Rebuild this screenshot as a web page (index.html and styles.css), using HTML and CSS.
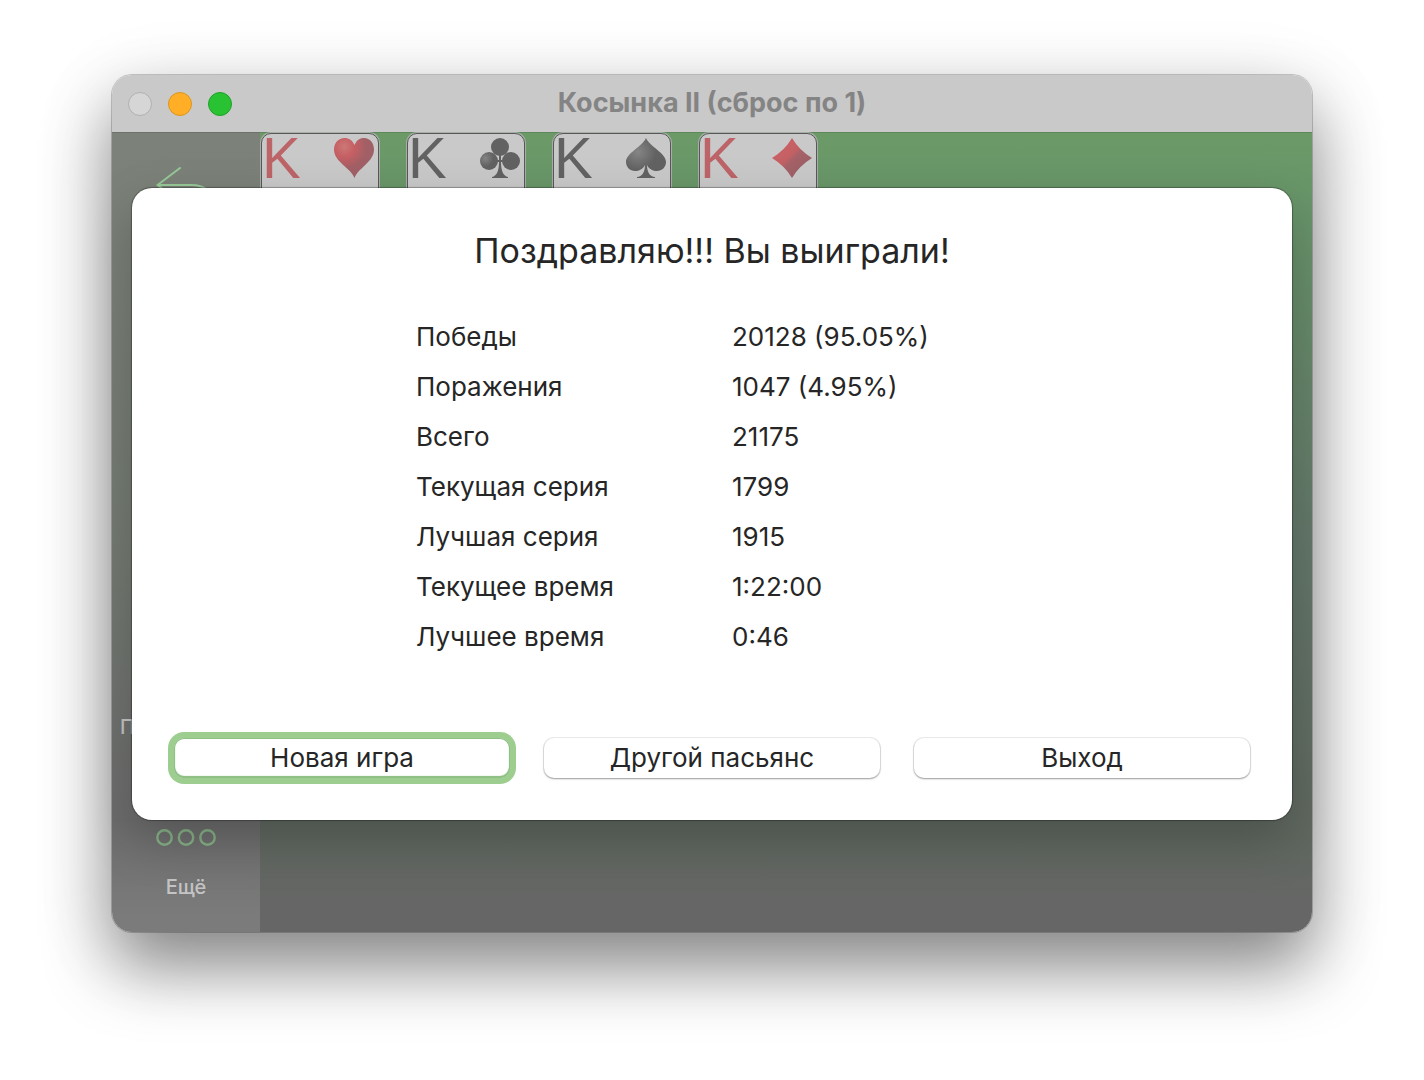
FILE: index.html
```html
<!DOCTYPE html>
<html lang="ru">
<head>
  <meta charset="utf-8">
  <meta name="viewport" content="width=device-width, initial-scale=1">
  <title>Косынка II (сброс по 1)</title>
  <link rel="stylesheet" href="styles.css">
</head>
<body>
  <main class="window">
    <header class="titlebar">
      <div class="lights">
        <span class="light light-off"></span>
        <span class="light light-minimize"></span>
        <span class="light light-zoom"></span>
      </div>
      <h1 class="title">Косынка II (сброс по 1)</h1>
    </header>

    <div class="game">
      <nav class="sidebar">
        <svg class="undo" viewBox="0 0 60 40" aria-hidden="true">
          <path d="M24 3 1.500 20 24 37M1.500 20H35C50 20 58 28 58 39"/>
        </svg>
        <div class="tools">
          <span class="tool-label tool-label-start">П</span>
          <svg class="dots" viewBox="0 0 62 18" aria-hidden="true">
            <circle cx="9.500" cy="9.500" r="7.200"/><circle cx="31" cy="9.500" r="7.200"/><circle cx="52.500" cy="9.500" r="7.200"/>
          </svg>
          <span class="tool-label">Ещё</span>
        </div>
      </nav>

      <section class="board">
        <div class="card card-red">
          <span class="rank">K</span>
          <svg class="suit" viewBox="0 0 40 40" aria-hidden="true">
            <defs>
              <radialGradient id="red" cx="0.260" cy="0.220" r="0.550">
                <stop offset="0" stop-color="#cc7878"/><stop offset="0.450" stop-color="#c65f64"/><stop offset="1" stop-color="#a16065"/>
              </radialGradient>
              <radialGradient id="black" cx="0.300" cy="0.350" r="0.450">
                <stop offset="0" stop-color="#858585"/><stop offset="1" stop-color="#626262"/>
              </radialGradient>
              <linearGradient id="ruby" x1="0.200" y1="0.200" x2="0.750" y2="0.750">
                <stop offset="0" stop-color="#cb6266"/><stop offset="0.450" stop-color="#c36064"/><stop offset="0.600" stop-color="#a66268"/><stop offset="1" stop-color="#9d6065"/>
              </linearGradient>
            </defs>
            <path fill="url(#red)" d="M20.500 40C17 30 0 24 0 11.500C0 5 4.500 0 10.500 0C15 0 18.500 2.500 20.500 7C22.500 2.500 25.500 0 30 0C36 0 40 5 40 11.500C40 24 24 30 20.500 40Z"/>
          </svg>
        </div>
        <div class="card">
          <span class="rank">K</span>
          <svg class="suit" viewBox="0 0 40 40" aria-hidden="true">
            <circle cx="20" cy="9" r="9" fill="#626262"/>
            <circle cx="9" cy="23" r="9" fill="url(#black)"/>
            <circle cx="31" cy="23" r="9" fill="#626262"/>
            <path fill="#626262" d="M19 17h2v5h5v2h-5C21 32 23 38 28 39V40H12V39C17 38 19 32 19 24h-5v-2h5Z"/>
          </svg>
        </div>
        <div class="card">
          <span class="rank">K</span>
          <svg class="suit" viewBox="0 0 40 40" aria-hidden="true">
            <path fill="url(#black)" d="M20 0C24 9 40 15 40 24C40 29 36 33 31 33C27 33 23 31 21 27C21 34 24 39 29 39V40H11V39C16 39 19 34 19 27C17 31 13 33 9 33C4 33 0 29 0 24C0 15 16 9 20 0Z"/>
          </svg>
        </div>
        <div class="card card-red">
          <span class="rank">K</span>
          <svg class="suit" viewBox="0 0 40 40" aria-hidden="true">
            <path fill="url(#ruby)" d="M20 0Q27 12 40 20Q27 28 20 40Q13 28 0 20Q13 12 20 0Z"/>
          </svg>
        </div>
      </section>
    </div>

    <section class="dialog" role="dialog" aria-labelledby="dialog-title">
      <h2 class="dialog-title" id="dialog-title">Поздравляю!!! Вы выиграли!</h2>
      <table class="stats">
        <tbody>
          <tr><th scope="row">Победы</th><td>20128 (95.05%)</td></tr>
          <tr><th scope="row">Поражения</th><td>1047 (4.95%)</td></tr>
          <tr><th scope="row">Всего</th><td>21175</td></tr>
          <tr><th scope="row">Текущая серия</th><td>1799</td></tr>
          <tr><th scope="row">Лучшая серия</th><td>1915</td></tr>
          <tr><th scope="row">Текущее время</th><td>1:22:00</td></tr>
          <tr><th scope="row">Лучшее время</th><td>0:46</td></tr>
        </tbody>
      </table>
      <div class="actions">
        <button class="button button-default" type="button">Новая игра</button>
        <button class="button" type="button">Другой пасьянс</button>
        <button class="button" type="button">Выход</button>
      </div>
    </section>
  </main>
</body>
</html>
```
FILE: styles.css
```css
*, *::before, *::after {
  box-sizing: border-box;
}

body {
  margin: 0;
  min-height: 100vh;
  padding: 75px 112px 148px;
  display: flex;
  background: #fff;
  color: #262626;
  font-family: Inter, "Liberation Sans", sans-serif;
  font-size: 26px;
}

.window {
  position: relative;
  flex: 1;
  display: flex;
  flex-direction: column;
  border-radius: 20px;
  box-shadow: 0 0 0 1px rgba(0, 0, 0, 0.2), 0 36px 68px rgba(0, 0, 0, 0.42), 0 16px 80px rgba(0, 0, 0, 0.12);
}

.titlebar {
  display: grid;
  grid-template-columns: 1fr auto 1fr;
  align-items: center;
  height: 57px;
  padding: 0 16px;
  border-radius: 20px 20px 0 0;
  background: #c9c9c9;
}

.lights {
  display: flex;
  gap: 16px;
}

.light {
  width: 24px;
  height: 24px;
  border: 1px solid #b0b0b0;
  border-radius: 50%;
  background: #d6d6d6;
}

.light-minimize {
  border-color: #dc961e;
  background: #ffae26;
}

.light-zoom {
  border-color: #1fa12a;
  background: #29c232;
}

.title {
  margin: 0;
  padding-bottom: 2px;
  color: #848484;
  font-size: 27px;
  font-weight: 700;
  line-height: 32px;
}

.game {
  flex: 1;
  display: flex;
  overflow: hidden;
  border-radius: 0 0 20px 20px;
}

.sidebar {
  flex: 0 0 148px;
  display: flex;
  flex-direction: column;
  align-items: center;
  justify-content: space-between;
  padding: 32px 8px;
  border-top: 1px solid #6d736b;
  background: linear-gradient(#7c8279, #747b72 50%, #6c6c6c 86%, #7b7b7b 98%);
}

.undo {
  width: 60px;
  height: 40px;
  fill: none;
  stroke: #98c998;
  stroke-width: 2;
  stroke-linecap: round;
}

.tools {
  align-self: stretch;
  display: flex;
  flex-direction: column;
  align-items: center;
}

.tool-label {
  color: #c4c4c4;
  font-size: 20px;
  font-weight: 500;
  line-height: 26px;
}

.tool-label-start {
  align-self: flex-start;
}

.dots {
  width: 62px;
  height: 18px;
  margin: 88px 0 28px;
  fill: none;
  stroke: #86b287;
  stroke-width: 2.400;
  overflow: visible;
}

.board {
  flex: 1;
  display: flex;
  align-items: flex-start;
  gap: 28px;
  padding: 0 1px;
  border-top: 1px solid #5f875e;
  background: linear-gradient(#6b9a67, #68946a 10%, #64786a 50%, #606860 88%, #666 97%);
}

.card {
  display: flex;
  justify-content: space-between;
  width: 118px;
  height: 160px;
  padding: 4px 4px 4px 0;
  border: 1px solid #5a565c;
  border-radius: 10px;
  background: #c9c9c9;
  color: #626262;
  box-shadow: 0 0 0 1px #a5b0a4;
}

.card-red {
  color: #bd6468;
}

.rank {
  font-family: "Liberation Sans", Arial, sans-serif;
  font-size: 58px;
  line-height: 40px;
}

.suit {
  width: 40px;
  height: 40px;
}

.dialog {
  position: absolute;
  top: 113px;
  left: 20px;
  right: 20px;
  padding: 40px 42px 42px;
  border-radius: 20px;
  background: #fff;
  box-shadow: 0 0 1px 1px rgba(0, 0, 0, 0.3), 0 20px 50px rgba(0, 0, 0, 0.22);
}

.dialog-title {
  margin: 0 0 38px;
  font-size: 34px;
  font-weight: 400;
  line-height: 46px;
  text-align: center;
}

.stats {
  width: 592px;
  margin: 0 auto 76px;
  border-collapse: collapse;
  table-layout: fixed;
}

.stats th,
.stats td {
  height: 50px;
  padding: 0 0 2px;
  font-weight: 400;
  text-align: left;
}

.stats th {
  width: 316px;
}

.actions {
  display: grid;
  grid-template-columns: repeat(3, 1fr);
  gap: 34px;
}

.button {
  height: 40px;
  padding: 0 0 2px;
  border: 0;
  border-radius: 10px;
  background: #fff;
  color: inherit;
  font: inherit;
  box-shadow: 0 0 0 1px rgba(0, 0, 0, 0.07), 0 1px 2px rgba(0, 0, 0, 0.35);
}

.button-default {
  box-shadow: 0 0 0 6px #9dce90, inset 0 0 0 1px #8fc184, inset 0 -1px 1px 1px #86b87b;
}
```
